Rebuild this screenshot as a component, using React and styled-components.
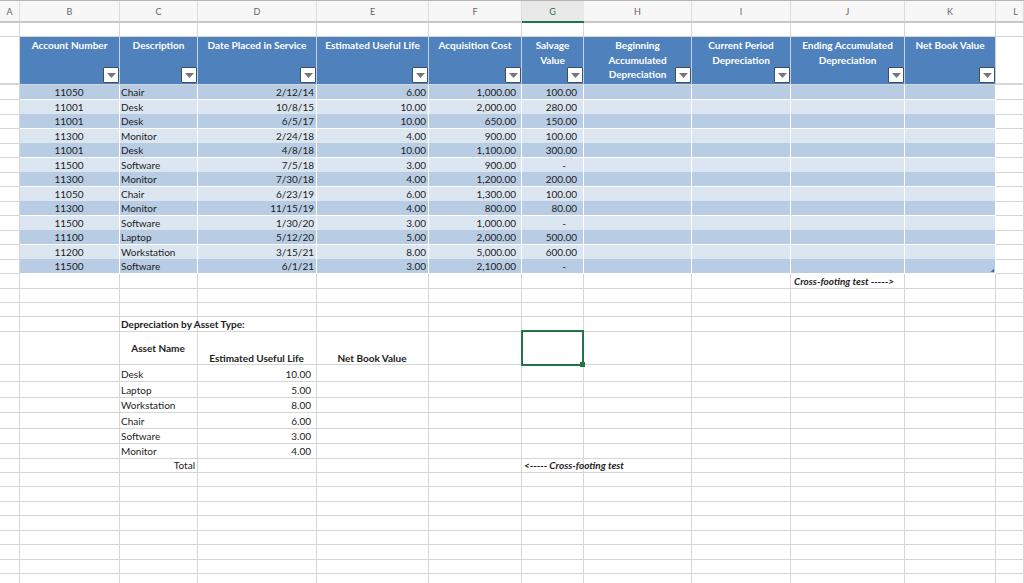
import React from "react";
import styled, { createGlobalStyle } from "styled-components";

const COLS = "20px 100px 78px 119px 112px 93px 62px 108px 99px 114px 91px 1fr";

const Global = createGlobalStyle`
  html, body { margin: 0; padding: 0; background: #fff; }
  body { font-family: Lato, "Liberation Sans", sans-serif; color: #1c1c1c; overflow: hidden; }
`;

const Sheet = styled.div`
  width: 1024px;
  height: 583px;
  overflow: hidden;
  background: #fff;
`;

const HeaderBar = styled.div`
  display: grid;
  grid-template-columns: ${COLS};
  height: 23px;
  box-sizing: border-box;
  border-top: 1px solid #b4b4b4;
  border-bottom: 2px solid #c8c8c8;
  background: #f7f7f7;
`;

const ColLabel = styled.div`
  display: flex;
  align-items: center;
  justify-content: center;
  box-sizing: border-box;
  padding-left: ${(p) => p.$shift || 0}px;
  font-size: 9px;
  color: ${(p) => (p.$active ? "#217346" : "#666")};
  background: ${(p) => (p.$active ? "#e9e9e9" : "transparent")};
  border-right: 1px solid ${(p) => (p.$active ? "transparent" : "#dcdcdc")};
  box-shadow: ${(p) => (p.$active ? "0 2px 0 #217346" : "none")};
`;

const Row = styled.div`
  display: grid;
  grid-template-columns: ${COLS};
  height: ${(p) => p.$h}px;
`;

const Cell = styled.div`
  position: relative;
  box-sizing: border-box;
  min-width: 0;
  display: flex;
  align-items: ${(p) => p.$v || "center"};
  justify-content: ${(p) => p.$align || "flex-start"};
  padding: ${(p) => p.$pt ?? 0}px ${(p) => p.$pr ?? 2}px 0 ${(p) => p.$pl ?? 1}px;
  font-size: 10px;
  line-height: 14px;
  white-space: nowrap;
  font-weight: ${(p) => (p.$bold ? 700 : 400)};
  font-style: ${(p) => (p.$italic ? "italic" : "normal")};
  background: ${(p) => p.$bg || "transparent"};
  border-right: 1px solid ${(p) => p.$line || "#d6d6d6"};
  border-bottom: 1px solid ${(p) => p.$line || "#d6d6d6"};
`;

const HeadCell = styled.div`
  position: relative;
  box-sizing: border-box;
  background: #4f81bd;
  color: #fff;
  font-size: 10px;
  font-weight: 700;
  line-height: 14.5px;
  text-align: center;
  padding-top: 1px;
  white-space: pre-line;
  border-right: 1px solid #c4d4e8;
`;

const Gutter = styled.div`
  box-sizing: border-box;
  border-right: 1px solid #d6d6d6;
  border-bottom: 1px solid #d6d6d6;
`;

const FilterBox = styled.span`
  position: absolute;
  right: 0;
  bottom: 1px;
  width: 16px;
  height: 16px;
  box-sizing: border-box;
  display: flex;
  align-items: center;
  justify-content: center;
  background: #fff;
  border: 1px solid #3f4f63;
  border-radius: 1px;
`;

const Selection = styled.div`
  position: absolute;
  inset: -2px -1px -2px -1px;
  border: 2px solid #217346;
  z-index: 2;
  &::after {
    content: "";
    position: absolute;
    right: -3px;
    bottom: -3px;
    width: 5px;
    height: 5px;
    background: #217346;
  }
`;

const Resize = styled.span`
  position: absolute;
  right: 1px;
  bottom: 1px;
  width: 4px;
  height: 4px;
  background: #4a66b8;
  clip-path: polygon(100% 0, 100% 100%, 0 100%);
`;

const Pad = styled.span`
  padding-top: 9px;
`;

const LowLabel = styled.span`
  position: relative;
  top: 1px;
`;

const Filter = () => (
  <FilterBox>
    <svg width="9" height="5" viewBox="0 0 9 5"><path d="M0 0h9L4.5 5z" fill="#777" /></svg>
  </FilterBox>
);

const heads = [
  "Account Number", "Description", "Date Placed in Service", "Estimated Useful Life",
  "Acquisition Cost", "Salvage\nValue", "Beginning\nAccumulated\nDepreciation",
  "Current Period\nDepreciation", "Ending Accumulated\nDepreciation", "Net Book Value",
];

const data = [
  ["11050", "Chair", "2/12/14", "6.00", "1,000.00", "100.00"],
  ["11001", "Desk", "10/8/15", "10.00", "2,000.00", "280.00"],
  ["11001", "Desk", "6/5/17", "10.00", "650.00", "150.00"],
  ["11300", "Monitor", "2/24/18", "4.00", "900.00", "100.00"],
  ["11001", "Desk", "4/8/18", "10.00", "1,100.00", "300.00"],
  ["11500", "Software", "7/5/18", "3.00", "900.00", "-"],
  ["11300", "Monitor", "7/30/18", "4.00", "1,200.00", "200.00"],
  ["11050", "Chair", "6/23/19", "6.00", "1,300.00", "100.00"],
  ["11300", "Monitor", "11/15/19", "4.00", "800.00", "80.00"],
  ["11500", "Software", "1/30/20", "3.00", "1,000.00", "-"],
  ["11100", "Laptop", "5/12/20", "5.00", "2,000.00", "500.00"],
  ["11200", "Workstation", "3/15/21", "8.00", "5,000.00", "600.00"],
  ["11500", "Software", "6/1/21", "3.00", "2,100.00", "-"],
];

const summary = [
  ["Desk", "10.00", 15.2],
  ["Laptop", "5.00", 15.6],
  ["Workstation", "8.00", 15.6],
  ["Chair", "6.00", 15.4],
  ["Software", "3.00", 15.3],
  ["Monitor", "4.00", 15.5],
];

const Blank = ({ n }) => Array.from({ length: n }, (_, i) => <Cell key={"b" + i} />);

const PlainRow = ({ h }) => (
  <Row $h={h}>
    <Gutter />
    <Blank n={11} />
  </Row>
);

export default function App() {
  return (
    <Sheet>
      <Global />
      <HeaderBar>
        {["A", "B", "C", "D", "E", "F", "G", "H", "I", "J", "K", "L"].map((c) => (
          <ColLabel key={c} $active={c === "G"} $shift={c === "L" ? 12 : 0}>{c}</ColLabel>
        ))}
      </HeaderBar>

      <PlainRow h={14} />

      <Row $h={47}>
        <Gutter />
        {heads.map((t) => (
          <HeadCell key={t}>
            {t}
            <Filter />
          </HeadCell>
        ))}
        <Cell />
      </Row>

      <PlainRow h={1} />

      {data.map((r, i) => {
        const bg = i % 2 === 0 ? "#b8cce4" : "#dce6f1";
        const cellProps = { $bg: bg, $line: "#fff" };
        return (
          <Row $h={14.54} key={i}>
            <Gutter />
            <Cell {...cellProps} $align="center">{r[0]}</Cell>
            <Cell {...cellProps}>{r[1]}</Cell>
            <Cell {...cellProps} $align="flex-end">{r[2]}</Cell>
            <Cell {...cellProps} $align="flex-end">{r[3]}</Cell>
            <Cell {...cellProps} $align="flex-end" $pr={5}>{r[4]}</Cell>
            <Cell {...cellProps} $align="flex-end" $pr={r[5] === "-" ? 17 : 6}>{r[5]}</Cell>
            <Cell {...cellProps} />
            <Cell {...cellProps} />
            <Cell {...cellProps} />
            <Cell {...cellProps}>{i === 12 && <Resize />}</Cell>
            <Cell />
          </Row>
        );
      })}

      <Row $h={14.5}>
        <Gutter />
        <Blank n={8} />
        <Cell $bold $italic $pl={3}>Cross-footing test -----&gt;</Cell>
        <Cell />
        <Cell />
      </Row>
      <PlainRow h={14.5} />
      <PlainRow h={14.5} />

      <Row $h={15}>
        <Gutter />
        <Cell />
        <Cell $bold>Depreciation by Asset Type:</Cell>
        <Blank n={9} />
      </Row>

      <Row $h={33}>
        <Gutter />
        <Cell />
        <Cell $bold $align="center" $v="flex-start"><Pad>Asset Name</Pad></Cell>
        <Cell $bold $align="center" $v="flex-end"><LowLabel>Estimated Useful Life</LowLabel></Cell>
        <Cell $bold $align="center" $v="flex-end"><LowLabel>Net Book Value</LowLabel></Cell>
        <Cell />
        <Cell><Selection /></Cell>
        <Blank n={5} />
      </Row>

      {summary.map(([name, val, h]) => (
        <Row $h={h} key={name}>
          <Gutter />
          <Cell />
          <Cell $pt={2}>{name}</Cell>
          <Cell $align="flex-end" $pr={5} $pt={2}>{val}</Cell>
          <Blank n={8} />
        </Row>
      ))}

      <Row $h={14.5}>
        <Gutter />
        <Cell />
        <Cell $align="flex-end">Total</Cell>
        <Cell />
        <Cell />
        <Cell />
        <Cell $bold $italic $pl={2}>&lt;----- Cross-footing test</Cell>
        <Blank n={5} />
      </Row>

      {Array.from({ length: 8 }, (_, i) => <PlainRow h={14.55} key={i} />)}
    </Sheet>
  );
}
